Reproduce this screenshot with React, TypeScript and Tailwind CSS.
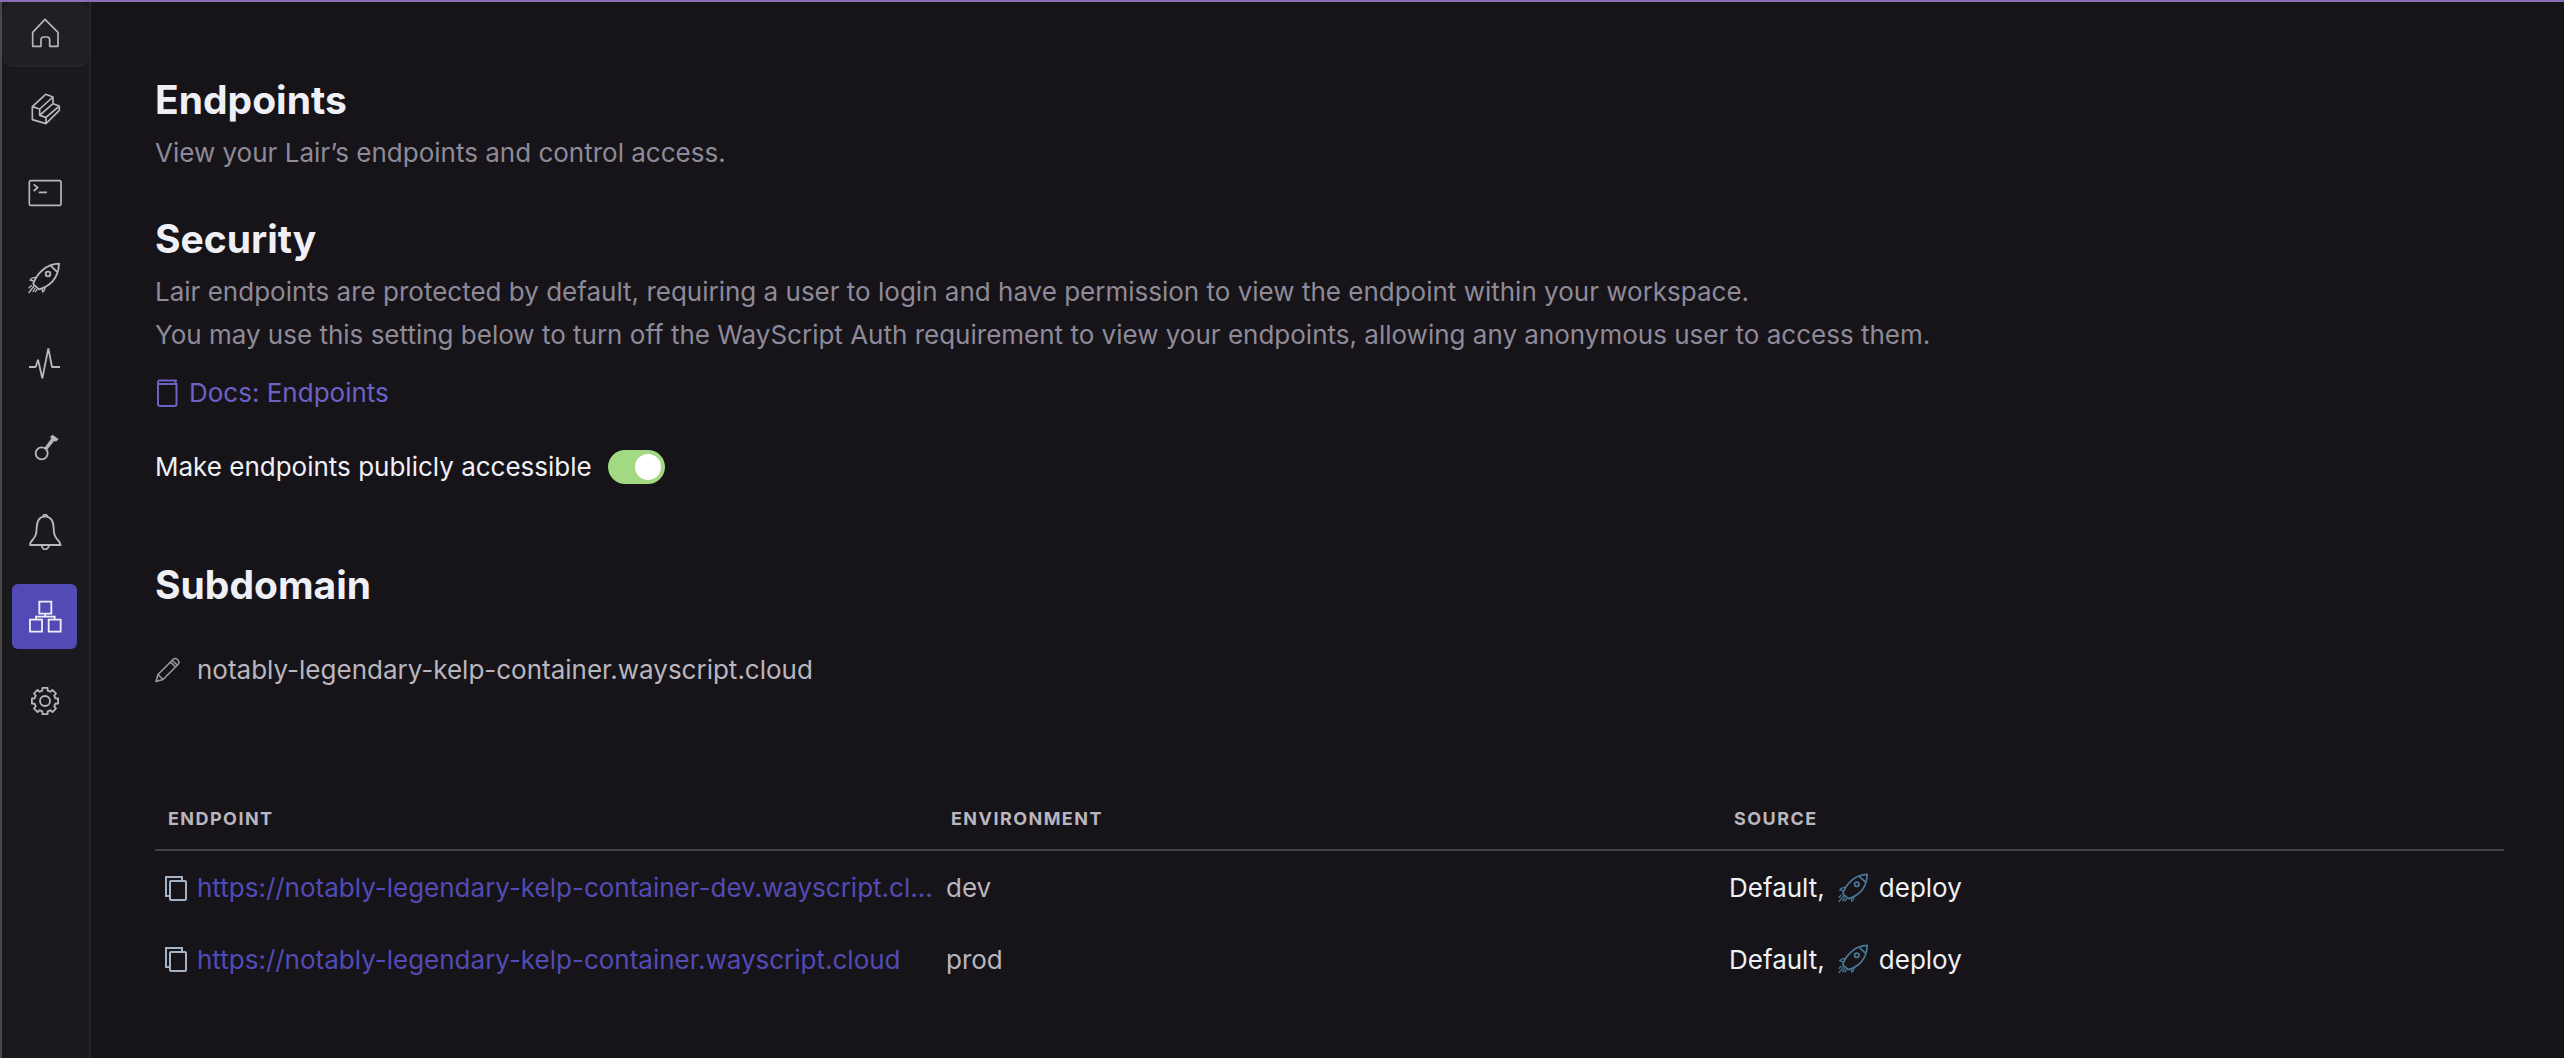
import { useState, type ReactNode } from "react";

const GEAR_PATH =
  Array.from({ length: 8 }, (_, i) => {
    const base = (i * Math.PI) / 4;
    const points: [number, number][] = [
      [32, -0.26],
      [40, -0.19],
      [40, 0.19],
      [32, 0.26],
    ];
    return points
      .map(([r, a], j) => {
        const x = (133 + r * Math.cos(base + a)).toFixed(1);
        const y = (662 + r * Math.sin(base + a)).toFixed(1);
        return `${i === 0 && j === 0 ? "M" : "L"}${x} ${y}`;
      })
      .join(" ");
  }).join(" ") + " Z";

function Glyph({ box, className, children }: { box: string; className: string; children: ReactNode }) {
  return (
    <svg
      viewBox={box}
      className={className}
      fill="none"
      stroke="currentColor"
      strokeWidth={5.5}
      strokeLinejoin="round"
      aria-hidden="true"
    >
      {children}
    </svg>
  );
}

function Rocket({ className }: { className: string }) {
  return (
    <Glyph box="79 117 108 108" className={className}>
      <path d="M175 128 Q147 129 126 147 Q107 163 98 187 L99 191 L115 205 Q137 200 155 182 Q174 160 175 128 Z" />
      <path d="M149 133 L171 154" />
      <circle cx="142" cy="159" r="7" />
      <path strokeWidth={4} d="M106 169 Q93 169 88 177 L99 180 M133 197 Q134 207 126 213 L124 203" />
      <path strokeWidth={4} d="M93 193 L84 202 M100 195 L84 216 M104 201 L96 213 M110 205 L103 213" />
    </Glyph>
  );
}

const NAV: { name: string; icon: ReactNode; active?: boolean }[] = [
  {
    name: "Files",
    icon: (
      <Glyph box="79 273 108 108" className="size-9">
        <path
          strokeWidth={5}
          d="M95 320 L135 283 L157 291 V311 L176 318 V331 L136 371 L95 359 Z M95 320 L117 327 V346 L136 352 V371 M117 327 L157 291 M117 346 L157 311 M136 352 L176 318"
        />
      </Glyph>
    ),
  },
  {
    name: "Terminal",
    icon: (
      <Glyph box="79 528 108 108" className="size-9">
        <rect x="86" y="545" width="95" height="74" rx="5" strokeWidth={5} />
        <path d="M99 556 L111 566 L99 576 M114 580 H139" />
      </Glyph>
    ),
  },
  { name: "Deployments", icon: <Rocket className="size-9" /> },
  {
    name: "Activity",
    icon: (
      <Glyph box="79 372 108 108" className="size-9">
        <path strokeLinejoin="bevel" d="M85 438 H105 L112 416 L125 472 L143 382 L154 438 H178" />
      </Glyph>
    ),
  },
  {
    name: "Secrets",
    icon: (
      <Glyph box="79 627 108 108" className="size-9">
        <circle cx="123" cy="700" r="18" />
        <path fill="currentColor" strokeWidth={1} d="M132 683 L152 656 L149 650 L156 645 L173 657 L167 664 L160 663 L139 689 Z" />
      </Glyph>
    ),
  },
  {
    name: "Alerts",
    icon: (
      <Glyph box="79 102 108 108" className="size-9">
        <path d="M88 195 H180 Q178 184 168 176 Q159 166 159 144 Q158 110 133 109 Q109 110 108 144 Q108 166 98 177 Q88 187 88 195 Z" />
        <path d="M126 110 Q133 96 141 110 M123 197 Q125 208 133 208 Q143 208 145 197" />
      </Glyph>
    ),
  },
  {
    name: "Endpoints",
    active: true,
    icon: (
      <Glyph box="79 355 108 108" className="size-9">
        <path
          strokeLinejoin="miter"
          d="M116 363 H152 V399 H116 Z M88 417 H124 V453 H88 Z M144 417 H180 V453 H144 Z M134 400 V408 M106 416 V408 H162 V416"
        />
      </Glyph>
    ),
  },
  {
    name: "Settings",
    icon: (
      <Glyph box="79 608 108 108" className="size-9">
        <path d={GEAR_PATH} />
        <circle cx="133" cy="662" r="15" />
      </Glyph>
    ),
  },
];

function BookIcon() {
  return (
    <svg viewBox="0 0 24 28" className="h-7 w-6" fill="none" stroke="currentColor" strokeWidth="2" aria-hidden="true">
      <path d="M22 1.5 H4.5 Q3 1.5 3 3.5 V25 Q3 27 5 27 H19.500 Q21.500 27 21.500 25 V5 H3.500 M20.500 1.500 V5" />
    </svg>
  );
}

function PencilIcon() {
  return (
    <svg viewBox="0 0 26 26" className="size-[26px]" fill="none" stroke="currentColor" strokeWidth="1.6" strokeLinejoin="round" aria-hidden="true">
      <path d="M1 24.500 L3 17.500 L18 2.500 Q20 0.500 22.500 2.500 Q25 5 23 7.500 L8 22.500 Z M3 17.500 L8 22.500 M1 24.500 L4 23.500 M15.500 5 L20.500 10 M17.500 3.500 L22 8" />
    </svg>
  );
}

function CopyIcon() {
  return (
    <svg viewBox="0 0 24 26" className="h-[26px] w-6" fill="none" stroke="currentColor" strokeWidth="2" aria-hidden="true">
      <path d="M19 5 V2 H3 V21 H6" />
      <rect x="7" y="6" width="16" height="19" rx="1" />
    </svg>
  );
}

const ROWS = [
  {
    url: "https://notably-legendary-kelp-container-dev.wayscript.cloud",
    label: "https://notably-legendary-kelp-container-dev.wayscript.cl...",
    env: "dev",
  },
  {
    url: "https://notably-legendary-kelp-container.wayscript.cloud",
    label: "https://notably-legendary-kelp-container.wayscript.cloud",
    env: "prod",
  },
];

const HEADING = "text-[39px] leading-12 font-bold text-[#eef0f6]";
const TH = "w-1/3 pt-px pb-[18px] pl-[13px] text-left text-lg leading-6 font-bold tracking-[0.08em] text-[#bab6bf]";

export default function App() {
  const [isPublic, setIsPublic] = useState(true);

  return (
    <div className="flex min-h-screen border-t-2 border-[#8b6fb5] bg-[#161418] font-[Inter,sans-serif] text-[26px] leading-[43px]">
      <nav aria-label="Lair" className="flex w-[91px] shrink-0 flex-col border-r-2 border-l-2 border-r-[#252429] border-l-[#48474b] bg-[#1a191d] text-[#bab6c0]">
        <a
          href="#home"
          aria-label="Home"
          className="flex h-[65px] items-center justify-center rounded-xl border-b-2 border-[#252429] bg-[#201f23] pr-0.5 pb-0.5"
        >
          <Glyph box="79 45 108 108" className="size-9">
            <path strokeWidth={5} d="M96 139 V97 L133 58 L172 97 V139 H147 V119 Q147 111 139 111 H129 Q121 111 121 119 V139 Z" />
          </Glyph>
        </a>
        <ul className="mt-[9px] flex h-[658px] flex-col items-center justify-between pr-0.5">
          {NAV.map((item) => (
            <li key={item.name}>
              <button
                type="button"
                aria-label={item.name}
                aria-current={item.active ? "page" : undefined}
                className={
                  item.active
                    ? "flex size-[65px] items-center justify-center rounded-md bg-[#524bb5] text-[#eeedf8]"
                    : "flex size-[65px] items-center justify-center rounded-md"
                }
              >
                {item.icon}
              </button>
            </li>
          ))}
        </ul>
      </nav>

      <main className="min-w-0 grow pt-[74px] pr-[60px] pl-16">
        <section>
          <h1 className={HEADING}>Endpoints</h1>
          <p className="mt-[7px] text-[#8f8a99]">View your Lair’s endpoints and control access.</p>
        </section>

        <section className="mt-[41px]">
          <h2 className={HEADING}>Security</h2>
          <p className="mt-[7px] text-[#8f8a99]">
            Lair endpoints are protected by default, requiring a user to login and have permission to view the endpoint within your workspace.
            <br />
            You may use this setting below to turn off the WayScript Auth requirement to view your endpoints, allowing any anonymous user to access them.
          </p>
          <a href="#docs" className="mt-[15px] flex w-fit items-center gap-2.5 text-[#6a62c4]">
            <BookIcon />
            Docs: Endpoints
          </a>
          <label className="mt-[31px] flex w-fit items-center gap-4 text-[#eef0f6]">
            Make endpoints publicly accessible
            <input
              type="checkbox"
              role="switch"
              checked={isPublic}
              onChange={(e) => setIsPublic(e.target.checked)}
              className="flex h-[34px] w-[57px] appearance-none items-center rounded-full bg-[#55525c] px-1 before:size-[26px] before:rounded-full before:bg-white checked:justify-end checked:bg-[#a3d983]"
            />
          </label>
        </section>

        <section className="mt-[73px]">
          <h2 className={HEADING}>Subdomain</h2>
          <div className="mt-[39px] flex items-center gap-4 text-[#bab6bf]">
            <button type="button" aria-label="Edit subdomain" className="text-[#9a979f]">
              <PencilIcon />
            </button>
            notably-legendary-kelp-container.wayscript.cloud
          </div>
        </section>

        <table className="mt-[115px] w-full table-fixed border-collapse">
          <thead>
            <tr className="border-b-2 border-[#434047]">
              <th scope="col" className={TH}>ENDPOINT</th>
              <th scope="col" className={TH}>ENVIRONMENT</th>
              <th scope="col" className={TH}>SOURCE</th>
            </tr>
          </thead>
          <tbody>
            {ROWS.map((row) => (
              <tr key={row.env} className="h-[72px]">
                <td className="pt-0.5 pl-2">
                  <div className="flex items-center gap-2.5">
                    <button type="button" aria-label={`Copy ${row.env} endpoint`} className="shrink-0 text-[#a5b3c6]">
                      <CopyIcon />
                    </button>
                    <a href={row.url} title={row.url} className="truncate text-[#524bb5]">
                      {row.label}
                    </a>
                  </div>
                </td>
                <td className="pt-0.5 pl-2 text-[#bab6bf]">{row.env}</td>
                <td className="pt-0.5 pl-2 text-[#eef0f6]">
                  <span className="flex items-center">
                    Default,
                    <Rocket className="mr-2 ml-3 size-[34px] text-[#4a7896]" />
                    deploy
                  </span>
                </td>
              </tr>
            ))}
          </tbody>
        </table>
      </main>
    </div>
  );
}
